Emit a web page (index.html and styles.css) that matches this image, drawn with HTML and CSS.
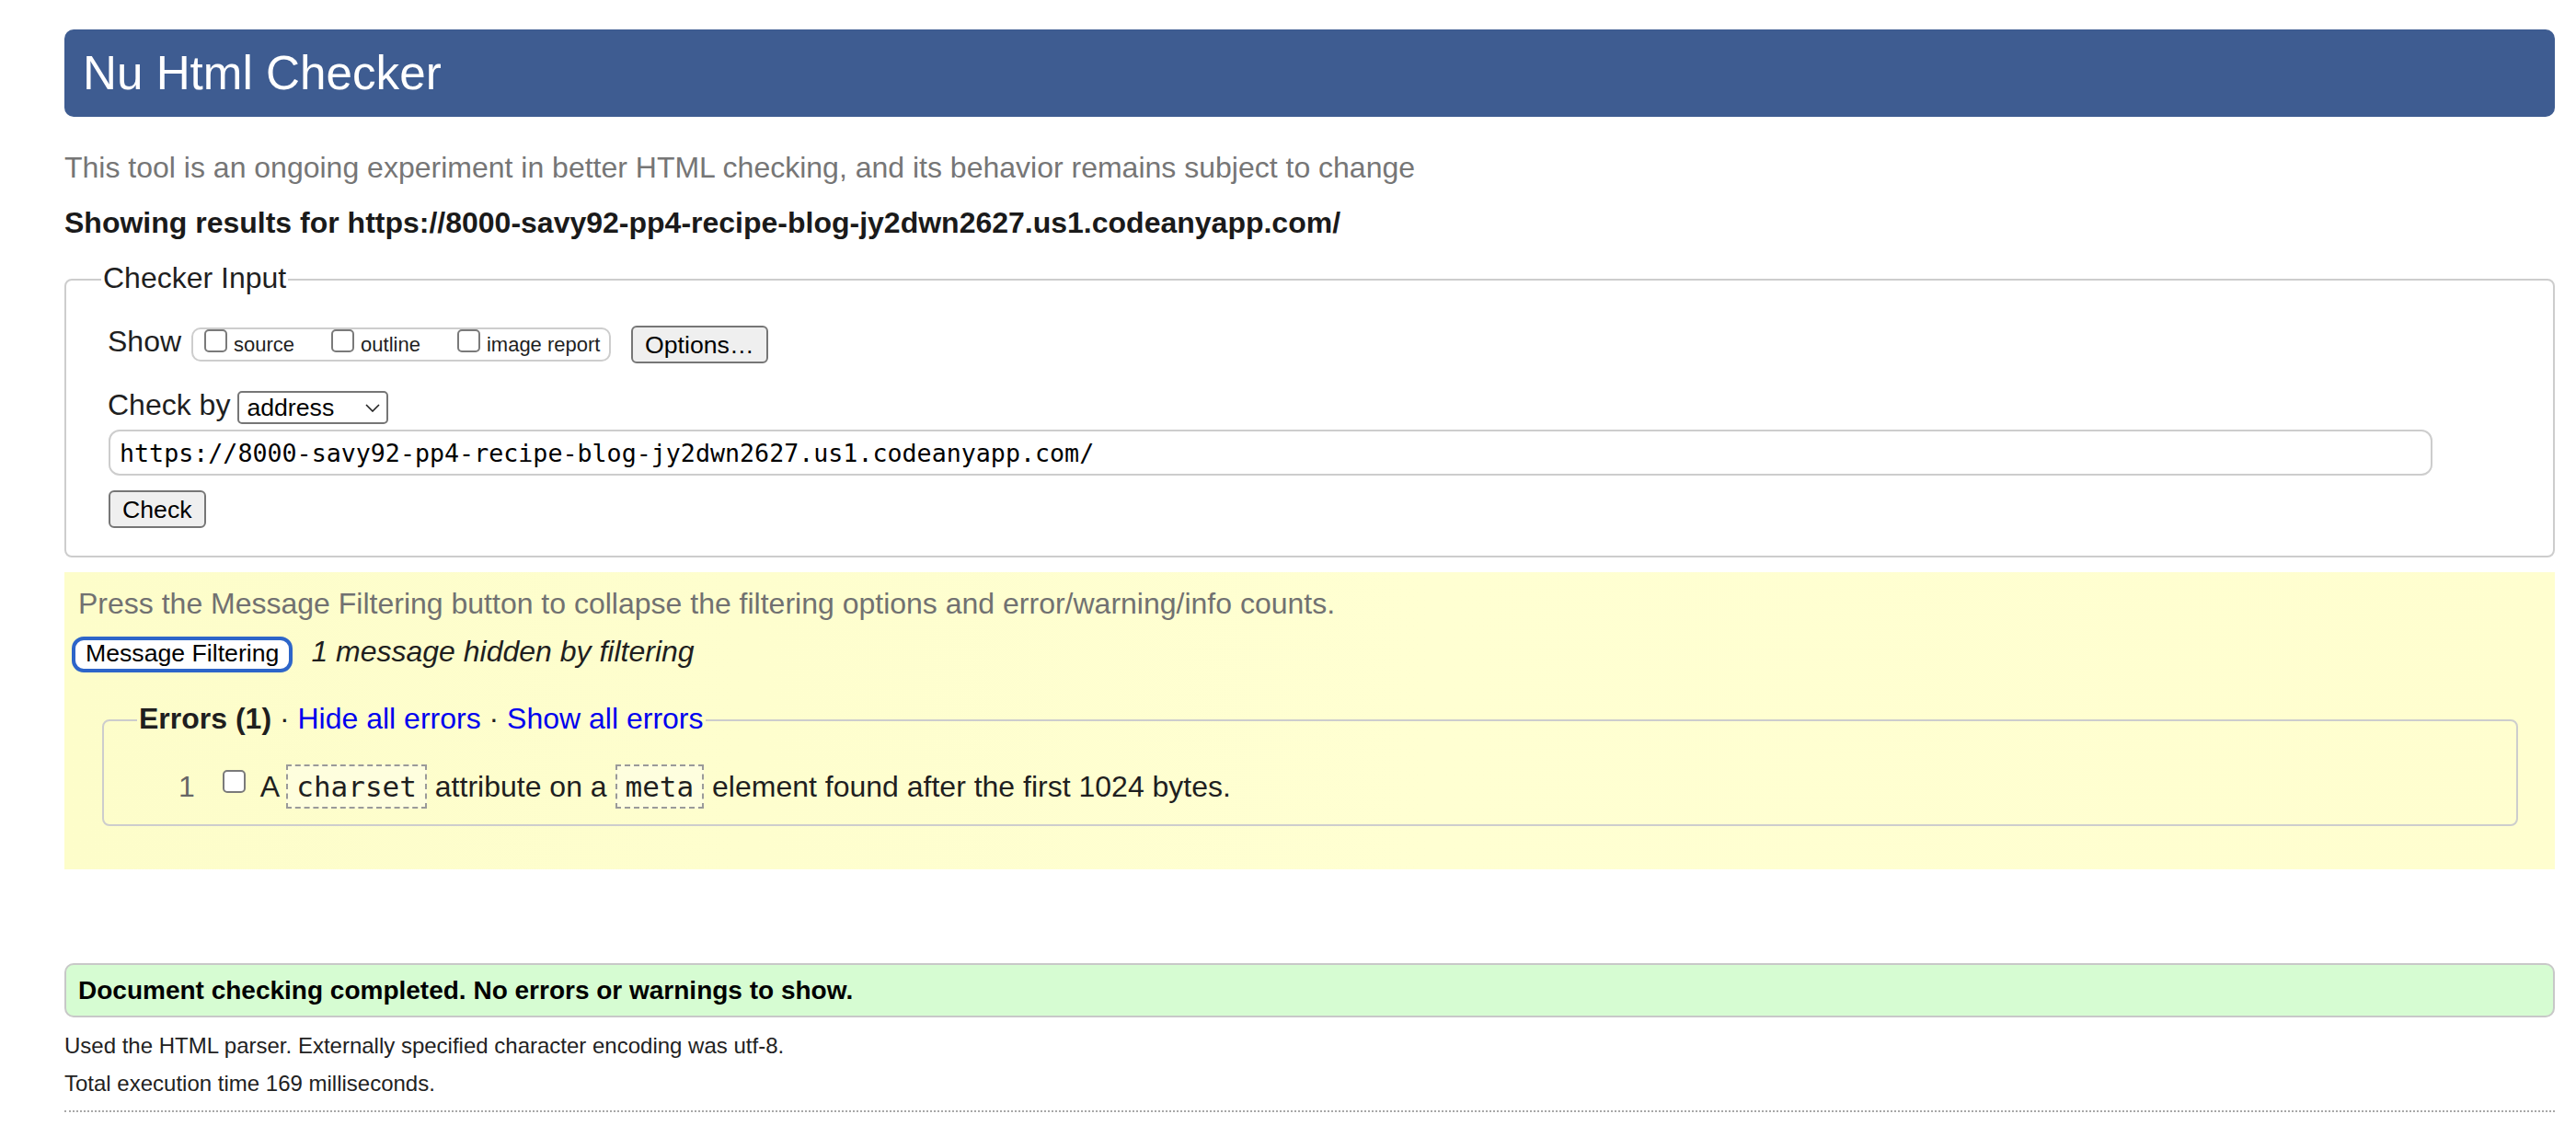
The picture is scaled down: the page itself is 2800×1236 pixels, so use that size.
FILE: index.html
```html
<!DOCTYPE html>
<html lang="en">
<head>
<meta charset="utf-8">
<title>Nu Html Checker</title>
<link rel="stylesheet" href="styles.css">
</head>
<body>
<div class="page">
  <h1 class="title">Nu Html Checker</h1>
  <p class="intro">This tool is an ongoing experiment in better HTML checking, and its behavior remains subject to change</p>
  <p class="results-for">Showing results for https://8000-savy92-pp4-recipe-blog-jy2dwn2627.us1.codeanyapp.com/</p>

  <form class="input-form">
    <fieldset class="checker">
      <legend class="checker-legend">Checker Input</legend>
      <div class="row row-show">
        <span class="label">Show</span>
        <div class="show-group">
          <label class="opt"><input type="checkbox" class="cb"><span class="opt-text">source</span></label>
          <label class="opt"><input type="checkbox" class="cb"><span class="opt-text">outline</span></label>
          <label class="opt"><input type="checkbox" class="cb"><span class="opt-text">image report</span></label>
        </div>
        <button type="button" class="btn btn-options">Options…</button>
      </div>
      <div class="row row-by">
        <span class="label">Check by</span>
        <span class="select-wrap">
          <select class="select"><option>address</option></select>
          <svg class="chev" viewBox="0 0 16 9" width="16" height="9"><polyline points="1,1 8,8 15,1" fill="none" stroke="#222" stroke-width="1.6"/></svg>
        </span>
      </div>
      <input class="url" type="text" value="https://8000-savy92-pp4-recipe-blog-jy2dwn2627.us1.codeanyapp.com/">
      <button type="button" class="btn btn-check">Check</button>
    </fieldset>
  </form>

  <section class="filters">
    <p class="filter-note">Press the Message Filtering button to collapse the filtering options and error/warning/info counts.</p>
    <div class="filter-row">
      <button type="button" class="filter-btn">Message Filtering</button>
      <span class="hidden-note">1 message hidden by filtering</span>
    </div>
    <fieldset class="errors">
      <legend class="errors-legend"><strong>Errors (1)</strong> · <a href="#" class="toggle">Hide all errors</a> · <a href="#" class="toggle">Show all errors</a></legend>
      <div class="err-row">
        <span class="num">1</span>
        <input type="checkbox" class="cb cb-err">
        <span class="msg">A <code class="code">charset</code> attribute on a <code class="code">meta</code> element found after the first 1024 bytes.</span>
      </div>
    </fieldset>
  </section>

  <p class="done">Document checking completed. No errors or warnings to show.</p>
  <div class="details">
    <p>Used the HTML parser. Externally specified character encoding was utf-8.</p>
    <p>Total execution time 169 milliseconds.</p>
  </div>
  <hr class="rule">
</div>
</body>
</html>
```

FILE: styles.css
```css
html, body {
  margin: 0;
  background: #fff;
}
body {
  color: #1f1f1f;
  font-family: "Liberation Sans", Arial, sans-serif;
}
.page {
  padding: 32px 23px 0 70px;
}
.title {
  margin: 0;
  height: 95px;
  line-height: 95px;
  font-size: 51.2px;
  font-weight: normal;
  color: #fff;
  background: #3e5c91;
  border-radius: 10px;
  padding-left: 20px;
}
.intro {
  margin: 35px 0 0;
  font-size: 32px;
  line-height: 40px;
  color: #767676;
}
.results-for {
  margin: 20px 0 0;
  font-size: 32px;
  line-height: 40px;
  font-weight: bold;
  color: #1a1a1a;
}
.input-form {
  margin: 0;
}
.checker {
  margin: 22px 0 0;
  padding: 0 0 30px 45px;
  border: 2px solid #cdcdcd;
  border-radius: 8px;
  min-width: 0;
}
.checker-legend {
  margin-left: -7px;
  padding: 0 2px 3px;
  font-size: 32px;
  line-height: 36px;
  color: #1f1f1f;
}
.row {
  display: flex;
  align-items: center;
}
.row-show {
  margin-top: 31px;
  height: 41px;
}
.label {
  font-size: 32px;
  line-height: 36px;
  color: #1f1f1f;
}
.row-show .label {
  margin-bottom: 7px;
}
.show-group {
  margin-left: 11px;
  box-sizing: border-box;
  width: 456px;
  height: 37px;
  border: 2px solid #cdcdcd;
  border-radius: 10px;
  padding: 0 0 0 12px;
  display: flex;
  align-items: flex-start;
}
.opt {
  display: flex;
  align-items: flex-start;
}
.opt + .opt {
  margin-left: 40px;
}
.cb {
  -webkit-appearance: none;
  appearance: none;
  margin: 0;
  width: 25px;
  height: 25px;
  box-sizing: border-box;
  border: 2px solid #7a7a7a;
  border-radius: 5px;
  background: #fff;
  flex: none;
}
.opt-text {
  margin: 5px 0 0 7px;
  font-size: 22px;
  line-height: 24px;
  color: #1f1f1f;
}
.btn {
  font-family: "Liberation Sans", Arial, sans-serif;
  font-size: 26.67px;
  line-height: 30px;
  color: #000;
  background: #efefef;
  border: 2px solid #767676;
  border-radius: 6px;
  box-sizing: border-box;
  height: 41px;
  padding: 0 13px;
}
.btn-options {
  margin-left: 22px;
}
.row-by {
  margin-top: 30px;
  height: 36px;
}
.row-by .label {
  margin-bottom: 6px;
}
.select-wrap {
  position: relative;
  display: block;
  margin-left: 8px;
  height: 36px;
}
.select {
  -webkit-appearance: none;
  appearance: none;
  display: block;
  margin: 0;
  width: 164px;
  height: 36px;
  box-sizing: border-box;
  border: 2px solid #767676;
  border-radius: 5px;
  background: #fff;
  padding: 0 0 0 8px;
  font-family: "Liberation Sans", Arial, sans-serif;
  font-size: 26.67px;
  color: #000;
}
.chev {
  position: absolute;
  right: 9px;
  top: 14px;
  pointer-events: none;
}
.url {
  display: block;
  margin: 6px 0 0 1px;
  width: 2526px;
  height: 50px;
  box-sizing: border-box;
  border: 2px solid #cdcdcd;
  border-radius: 12px;
  padding: 0 0 0 10px;
  font-family: "DejaVu Sans Mono", monospace;
  font-size: 26.67px;
  color: #000;
  background: #fff;
}
.btn-check {
  display: block;
  margin: 16px 0 0 1px;
}
.filters {
  margin-top: 16px;
  padding: 14px 8px 47px 8px;
  background: linear-gradient(to right, #fdfdca 0%, #ffffd2 55%, #fffecf 100%);
}
.filter-note {
  margin: 0 0 0 7px;
  font-size: 32px;
  line-height: 40px;
  color: #717171;
}
.filter-row {
  display: flex;
  align-items: center;
  margin-top: 16px;
  height: 39px;
}
.filter-btn {
  height: 39px;
  box-sizing: border-box;
  border: 4px solid #2d65c9;
  border-radius: 13px;
  background: #fff;
  padding: 0 11px 2px;
  font-family: "Liberation Sans", Arial, sans-serif;
  font-size: 26.67px;
  line-height: 27px;
  color: #000;
}
.hidden-note {
  margin: 0 0 7px 20px;
  font-size: 32px;
  line-height: 36px;
  font-style: italic;
  color: #1f1f1f;
}
.errors {
  margin: 32px 32px 0 33px;
  padding: 0 0 17px 36px;
  border: 2px solid #cdcdcd;
  border-radius: 8px;
  min-width: 0;
}
.errors-legend {
  padding: 0 2px 4px;
  font-size: 32px;
  line-height: 36px;
  color: #1f1f1f;
}
.errors-legend strong {
  font-weight: bold;
}
.toggle {
  color: #0000ee;
  text-decoration: none;
}
.err-row {
  display: flex;
  align-items: flex-start;
  margin-top: 28px;
}
.num {
  margin: 6px 0 0 45px;
  font-size: 32px;
  line-height: 36px;
  color: #666;
}
.cb-err {
  margin: 6px 0 0 30px;
}
.msg {
  margin-left: 16px;
  font-size: 32px;
  line-height: 36px;
  color: #1f1f1f;
}
.code {
  display: inline-block;
  font-family: "DejaVu Sans Mono", monospace;
  font-size: 31px;
  line-height: 36px;
  padding: 4px 9px;
  border: 2px dashed #9a9a9a;
  background: rgba(255, 255, 255, 0.35);
  color: #1f1f1f;
}
.done {
  margin: 102px 0 0;
  height: 59px;
  box-sizing: border-box;
  border: 2px solid #c8c8c8;
  border-radius: 10px;
  background: #d6fcd2;
  padding-left: 13px;
  font-size: 28px;
  font-weight: bold;
  line-height: 55px;
  color: #000;
}
.details {
  margin-top: 10px;
}
.details p {
  margin: 0;
  font-size: 24px;
  line-height: 41px;
  color: #222;
}
.rule {
  margin: 9px 0 0;
  border: 0;
  border-top: 2px dotted #a8a8a8;
  height: 0;
}
```
